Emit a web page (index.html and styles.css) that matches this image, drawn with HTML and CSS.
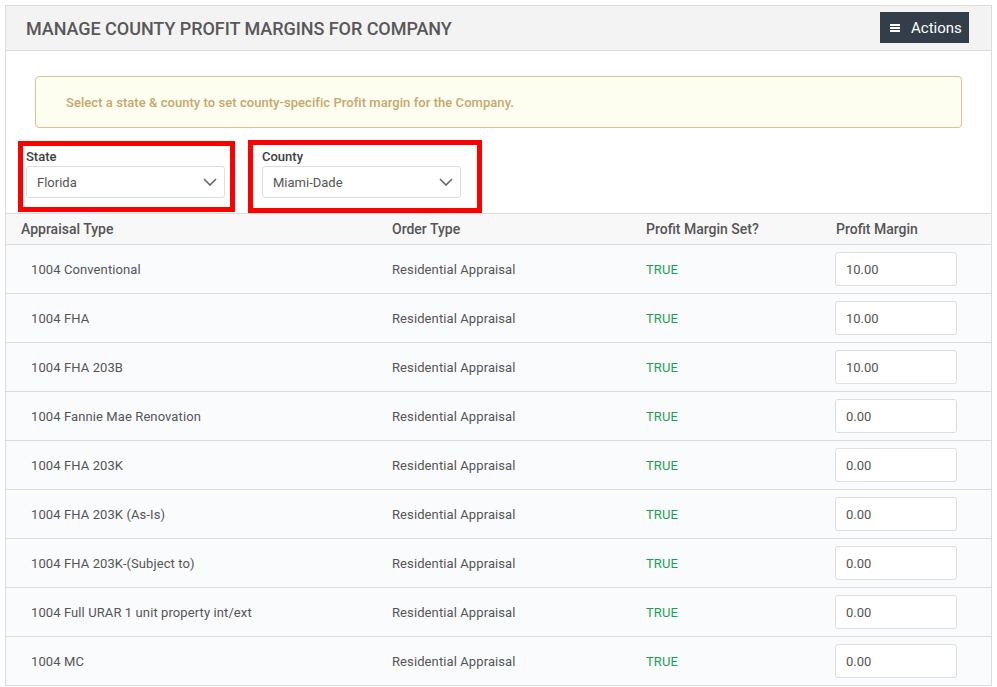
FILE: index.html
```html
<!DOCTYPE html>
<html>
<head>
  <meta charset="UTF-8">
  <meta name="viewport" content="width=device-width, initial-scale=1.0">
  <title>Manage County Profit Margins</title>
  <link rel="stylesheet" href="styles.css">
</head>
<body>
  <div class="panel">
    <div class="panel-head">
      <div class="panel-title">MANAGE COUNTY PROFIT MARGINS FOR COMPANY</div>
      <button class="btn-actions">
        <svg width="10" height="8" viewBox="0 0 10 8"><rect x="0" y="0" width="10" height="2" fill="#fff"/><rect x="0" y="3" width="10" height="2" fill="#fff"/><rect x="0" y="6" width="10" height="2" fill="#fff"/></svg>
        <span>Actions</span>
      </button>
    </div>

    <div class="alert">Select a state &amp; county to set county-specific Profit margin for the Company.</div>

    <div class="filters">
      <div class="field mark-state">
        <label class="field-label" for="state">State</label>
        <div class="select-wrap">
          <select id="state" class="select"><option>Florida</option></select>
          <svg class="chev" width="14" height="8" viewBox="0 0 14 8"><path d="M1 1 L7 7 L13 1" fill="none" stroke="#666" stroke-width="1.6"/></svg>
        </div>
      </div>
      <div class="field mark-county">
        <label class="field-label" for="county">County</label>
        <div class="select-wrap">
          <select id="county" class="select"><option>Miami-Dade</option></select>
          <svg class="chev" width="14" height="8" viewBox="0 0 14 8"><path d="M1 1 L7 7 L13 1" fill="none" stroke="#666" stroke-width="1.6"/></svg>
        </div>
      </div>
    </div>

    <table class="margins">
      <colgroup>
        <col class="c1"><col class="c2"><col class="c3"><col class="c4">
      </colgroup>
      <thead>
        <tr>
          <th>Appraisal Type</th>
          <th>Order Type</th>
          <th>Profit Margin Set?</th>
          <th>Profit Margin</th>
        </tr>
      </thead>
      <tbody>
        <tr><td class="type">1004 Conventional</td><td>Residential Appraisal</td><td class="yes">TRUE</td><td><input class="margin-input" value="10.00"></td></tr>
        <tr><td class="type">1004 FHA</td><td>Residential Appraisal</td><td class="yes">TRUE</td><td><input class="margin-input" value="10.00"></td></tr>
        <tr><td class="type">1004 FHA 203B</td><td>Residential Appraisal</td><td class="yes">TRUE</td><td><input class="margin-input" value="10.00"></td></tr>
        <tr><td class="type">1004 Fannie Mae Renovation</td><td>Residential Appraisal</td><td class="yes">TRUE</td><td><input class="margin-input" value="0.00"></td></tr>
        <tr><td class="type">1004 FHA 203K</td><td>Residential Appraisal</td><td class="yes">TRUE</td><td><input class="margin-input" value="0.00"></td></tr>
        <tr><td class="type">1004 FHA 203K (As-Is)</td><td>Residential Appraisal</td><td class="yes">TRUE</td><td><input class="margin-input" value="0.00"></td></tr>
        <tr><td class="type">1004 FHA 203K-(Subject to)</td><td>Residential Appraisal</td><td class="yes">TRUE</td><td><input class="margin-input" value="0.00"></td></tr>
        <tr><td class="type">1004 Full URAR 1 unit property int/ext</td><td>Residential Appraisal</td><td class="yes">TRUE</td><td><input class="margin-input" value="0.00"></td></tr>
        <tr><td class="type">1004 MC</td><td>Residential Appraisal</td><td class="yes">TRUE</td><td><input class="margin-input" value="0.00"></td></tr>
      </tbody>
    </table>
  </div>
</body>
</html>
```

FILE: styles.css
```css
body {
  margin: 0;
  padding: 5px 5px 0;
  font-family: Roboto, "Liberation Sans", sans-serif;
  color: #555;
  background: #fff;
}
.panel {
  border: 1px solid #dcdcdc;
  border-bottom: 0;
  background: #fff;
}
.panel-head {
  height: 44px;
  display: flex;
  align-items: flex-start;
  justify-content: space-between;
  padding: 0 22px 0 20px;
  background: #f3f3f3;
  border-bottom: 1px solid #dcdcdc;
}
.panel-title {
  font-size: 18px;
  font-weight: 500;
  color: #585858;
  line-height: 46px;
  letter-spacing: -0.05px;
}
.btn-actions {
  margin-top: 6px;
  height: 31px;
  width: 89px;
  display: flex;
  align-items: center;
  gap: 11px;
  padding: 0 0 0 10px;
  border: 0;
  background: #333e4a;
  color: #fff;
  font-family: inherit;
  font-size: 15px;
}
.alert {
  margin: 25px 29px 0;
  padding: 18px 30px 16px;
  line-height: 16px;
  font-size: 13px;
  font-weight: 500;
  color: #c6a86b;
  background: #fdfdf0;
  border: 1px solid #d6c293;
  border-radius: 4px;
  letter-spacing: 0.05px;
}
.filters {
  display: flex;
  align-items: flex-start;
  margin-top: 12px;
}
.field {
  border: 5px solid #f00;
}
.mark-state {
  margin: 1px 0 0 12px;
  padding: 3px 5px 9px 3px;
}
.mark-county {
  margin-left: 13px;
  padding: 4px 16px 10px 9px;
}
.field-label {
  display: block;
  font-size: 13px;
  line-height: 16px;
  font-weight: 500;
  color: #3d3d3d;
  margin-bottom: 1px;
}
.select-wrap {
  position: relative;
  width: 199px;
}
.select {
  display: block;
  width: 199px;
  height: 32px;
  padding: 0 30px 0 10px;
  border: 1px solid #dedede;
  border-radius: 3px;
  background: #fff;
  color: #555;
  font-family: inherit;
  font-size: 13px;
  appearance: none;
  -webkit-appearance: none;
}
.chev {
  position: absolute;
  right: 8px;
  top: 12px;
}
.margins {
  width: 100%;
  border-collapse: collapse;
  table-layout: fixed;
  font-size: 13px;
}
.c1 { width: 371px; }
.c2 { width: 254px; }
.c3 { width: 190px; }
.c4 { width: 170px; }
.margins th {
  height: 30px;
  padding: 0 15px;
  text-align: left;
  font-size: 14px;
  font-weight: 500;
  color: #555;
  background: #f8f8f8;
  border-top: 1px solid #dcdcdc;
  border-bottom: 1px solid #dcdcdc;
}
.margins td {
  height: 48px;
  padding: 0 15px;
  background: #fafbfd;
  border-bottom: 1px solid #dcdcdc;
  color: #555;
  letter-spacing: 0.1px;
}
.margins td.type {
  padding-left: 25px;
}
.margins td.yes {
  color: #1c9e55;
}
.margins td:last-child {
  padding-left: 14px;
}
.margin-input {
  display: block;
  width: 122px;
  height: 34px;
  box-sizing: border-box;
  padding: 0 10px;
  border: 1px solid #dedede;
  border-radius: 3px;
  background: #fff;
  color: #555;
  font-family: inherit;
  font-size: 13px;
}
```
